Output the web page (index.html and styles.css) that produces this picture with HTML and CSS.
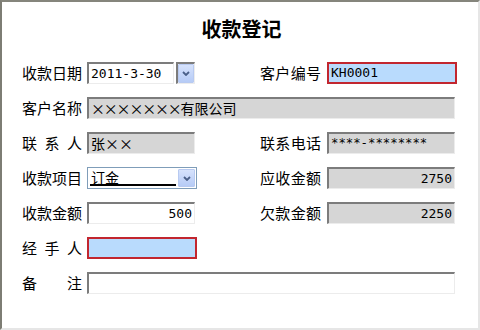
FILE: index.html
```html
<!DOCTYPE html>
<html lang="zh-CN">
<head>
<meta charset="utf-8">
<title>收款登记</title>
<link rel="stylesheet" href="styles.css">
</head>
<body>
<div class="frame">
  <h1 class="title">收款登记</h1>
  <div class="form">
    <span class="lbl">收款日期</span>
    <div class="datecell">
      <div class="fld sunken white mono date">2011-3-30</div>
      <div class="ddwrap"><span class="ddbtn"><svg viewBox="0 0 8 5" width="8" height="5"><path d="M1 1 L4 4 L7 1" fill="none" stroke="#4a5f88" stroke-width="1.8"/></svg></span></div>
    </div>
    <span class="sp"></span>
    <span class="lbl r">客户编号</span>
    <div class="fld focus mono wr">KH0001</div>

    <span class="lbl">客户名称</span>
    <div class="fld sunken gray cjk span4"><span class="xs">×××××××</span>有限公司</div>

    <span class="lbl">联系人</span>
    <div class="fld sunken gray cjk wl">张××</div>
    <span class="sp"></span>
    <span class="lbl r">联系电话</span>
    <div class="fld sunken gray mono star wrs">****-********</div>

    <span class="lbl">收款项目</span>
    <div class="select">
      <span class="seltext">订金</span>
      <span class="ddbtn sel"><svg viewBox="0 0 8 5" width="8" height="5"><path d="M1 1 L4 4 L7 1" fill="none" stroke="#4a5f88" stroke-width="1.8"/></svg></span>
    </div>
    <span class="sp"></span>
    <span class="lbl r">应收金额</span>
    <div class="fld sunken gray mono num wrs">2750</div>

    <span class="lbl">收款金额</span>
    <div class="fld sunken white mono num wl">500</div>
    <span class="sp"></span>
    <span class="lbl r">欠款金额</span>
    <div class="fld sunken gray mono num wrs">2250</div>

    <span class="lbl">经手人</span>
    <div class="fld focus wfl"></div>
    <span class="sp3"></span>

    <span class="lbl">备注</span>
    <div class="fld sunken white span4"></div>
  </div>
</div>
</body>
</html>
```
FILE: styles.css
```css
html, body {
  margin: 0;
  padding: 0;
  background: #ffffff;
}

.frame {
  box-sizing: border-box;
  width: 480px;
  height: 330px;
  border-style: solid;
  border-width: 2px 2px 2px 2px;
  border-color: #85857c #e6e6e6 #e6e6e6 #7d7d74;
  background: #ffffff;
  padding: 17px 0 0 20px;
  font-family: "Noto Sans CJK SC", sans-serif;
  color: #000;
}

.title {
  margin: 0 0 23px -20px;
  font-size: 20px;
  line-height: 20px;
  font-weight: bold;
  text-align: center;
  padding-left: 3px;
}

.form {
  display: grid;
  grid-template-columns: 65px 110px 63px 67px 130px;
  grid-auto-rows: 22px;
  row-gap: 13px;
  align-items: center;
}

.lbl {
  display: block;
  width: 60px;
  font-size: 15px;
  line-height: 22px;
  height: 22px;
  text-align: justify;
  text-align-last: justify;
  white-space: nowrap;
}
.lbl.r { width: 61px; }

.sp { display: block; }
.sp3 { grid-column: span 3; }

.fld {
  box-sizing: border-box;
  height: 22px;
  line-height: 19px;
  padding: 0 2px;
  white-space: nowrap;
  overflow: hidden;
}

.sunken {
  border-style: solid;
  border-width: 2px 1px 1px 2px;
  border-color: #7c7c7c #ececec #ececec #7c7c7c;
}
.white { background: #ffffff; }
.gray { background: #d6d6d6; }

.focus {
  border: 2px solid #c2262f;
  background: #b9dbfd;
  line-height: 18px;
}

.mono {
  font-family: "DejaVu Sans Mono", "Liberation Mono", monospace;
  font-size: 13px;
}
.star { font-size: 12.3px; }
.cjk {
  font-size: 14px;
  font-feature-settings: "fwid";
}
.xs { letter-spacing: -1.2px; }
.num { text-align: right; }

.wl { width: 108px; }
.wfl { width: 110px; }
.wr { width: 130px; }
.wrs { width: 128px; }
.span4 { grid-column: span 4; width: 368px; }

.datecell {
  display: flex;
  gap: 2px;
  height: 22px;
}
.date { width: 87px; }

.ddwrap {
  box-sizing: border-box;
  width: 19px;
  height: 22px;
  border-style: solid;
  border-width: 2px 1px 1px 2px;
  border-color: #7c7c7c #ececec #ececec #7c7c7c;
  display: flex;
}

.ddbtn {
  box-sizing: border-box;
  flex: 1;
  display: flex;
  align-items: center;
  justify-content: center;
  background: linear-gradient(#d6e2fc, #b6cbf6);
  border: 1px solid #b8caf1;
  border-radius: 1px;
}

.select {
  box-sizing: border-box;
  width: 110px;
  height: 22px;
  border: 1px solid #7f9db9;
  background: #ffffff;
  display: flex;
  align-items: stretch;
  padding: 1px;
  gap: 2px;
}
.seltext {
  box-sizing: border-box;
  width: 88px;
  margin-left: 1px;
  font-size: 14px;
  line-height: 16px;
  border-bottom: 2px solid #000;
  padding-left: 1px;
  margin-bottom: 1px;
}
.ddbtn.sel {
  flex: 0 0 17px;
  width: 17px;
}
```
